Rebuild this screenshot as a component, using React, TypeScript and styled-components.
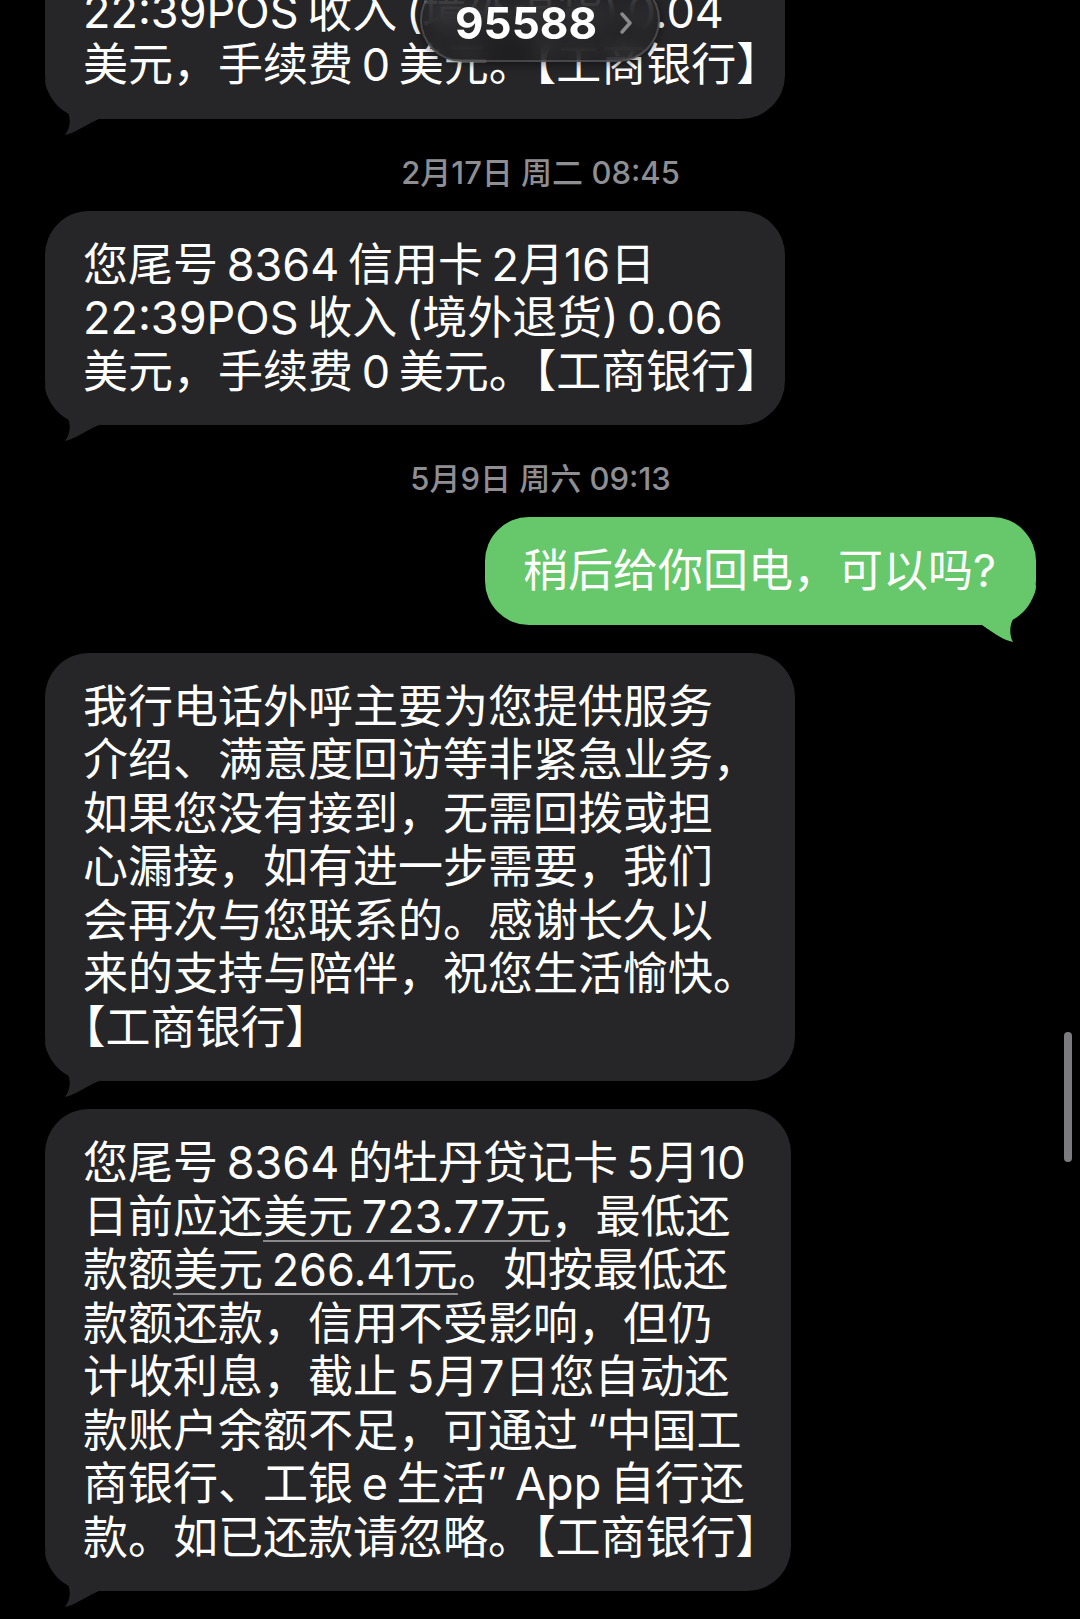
import React from "react";
import styled, { createGlobalStyle } from "styled-components";

const GlobalStyle = createGlobalStyle`
  html, body {
    margin: 0;
    padding: 0;
    background: #000;
    overflow: hidden;
  }
  body {
    font-family: Inter, "Noto Sans CJK SC", sans-serif;
  }
`;

type Line = React.ReactNode;

type Message =
  | { kind: "time"; text: string }
  | { kind: "in" | "out"; width: number; lines: Line[] };

const Money = styled.span`
  text-decoration: underline;
  text-decoration-color: #8a8a8c;
  text-decoration-thickness: 2px;
  text-underline-offset: 7px;
`;

const messages: Message[] = [
  {
    kind: "in",
    width: 740,
    lines: [
      "您尾号 8364 信用卡 2月16日",
      "22:39POS 收入 (境外退货) 0.04",
      "美元，手续费 0 美元。【工商银行】",
    ],
  },
  { kind: "time", text: "2月17日 周二 08:45" },
  {
    kind: "in",
    width: 740,
    lines: [
      "您尾号 8364 信用卡 2月16日",
      "22:39POS 收入 (境外退货) 0.06",
      "美元，手续费 0 美元。【工商银行】",
    ],
  },
  { kind: "time", text: "5月9日 周六 09:13" },
  { kind: "out", width: 551, lines: ["稍后给你回电，可以吗?"] },
  {
    kind: "in",
    width: 750,
    lines: [
      "我行电话外呼主要为您提供服务",
      "介绍、满意度回访等非紧急业务，",
      "如果您没有接到，无需回拨或担",
      "心漏接，如有进一步需要，我们",
      "会再次与您联系的。感谢长久以",
      "来的支持与陪伴，祝您生活愉快。",
      "【工商银行】",
    ],
  },
  {
    kind: "in",
    width: 746,
    lines: [
      "您尾号 8364 的牡丹贷记卡 5月10",
      <>
        日前应还<Money>美元 723.77元</Money>，最低还
      </>,
      <>
        款额<Money>美元 266.41元</Money>。如按最低还
      </>,
      "款额还款，信用不受影响，但仍",
      "计收利息，截止 5月7日您自动还",
      "款账户余额不足，可通过 “中国工",
      "商银行、工银 e 生活” App 自行还",
      "款。如已还款请忽略。【工商银行】",
    ],
  },
];

const InTail = () => (
  <TailSvg $side="left" width="80" height="60" viewBox="0 0 80 60">
    <path
      d="M0 0 C0 14 10 22 18 27 C25 32 28 46 20 56 C30 54 40 46 54 40 L80 40 L80 0 Z"
      fill="#262628"
    />
  </TailSvg>
);

const OutTail = () => (
  <TailSvg $side="right" width="80" height="60" viewBox="0 0 80 60">
    <path
      d="M80 0 C80 14 70 20 62 27 C54 35 52 48 57 57 C48 55 40 50 26 40 L0 40 L0 0 Z"
      fill="#66c86a"
    />
  </TailSvg>
);

const App = () => {
  return (
    <Screen>
      <GlobalStyle />
      <Thread>
        {messages.map((m, i) =>
          m.kind === "time" ? (
            <Stamp key={i}>{m.text}</Stamp>
          ) : (
            <Bubble key={i} $width={m.width} $sent={m.kind === "out"}>
              {m.kind === "out" ? <OutTail /> : <InTail />}
              <Text>
                {m.lines.map((l, j) => (
                  <TextLine key={j}>{l}</TextLine>
                ))}
              </Text>
            </Bubble>
          ),
        )}
      </Thread>

      <SenderPill>
        <SenderNumber>95588</SenderNumber>
        <svg width="14" height="24" viewBox="0 0 14 24">
          <path
            d="M3 3 L11 12 L3 21"
            fill="none"
            stroke="#8a8a8c"
            strokeWidth="3.5"
            strokeLinecap="round"
            strokeLinejoin="round"
          />
        </svg>
      </SenderPill>

      <ScrollThumb />
    </Screen>
  );
};

export default App;

const Screen = styled.div`
  position: relative;
  width: 1080px;
  height: 1619px;
  overflow: hidden;
  background: #000;
`;

/* the thread is scrolled: the first bubble starts above the top edge */
const Thread = styled.div`
  display: flex;
  flex-direction: column;
  margin-top: -96px;
  padding: 0 44px 0 45px;
`;

const Stamp = styled.div`
  padding: 34px 0 18px;
  text-align: center;
  font-size: 31px;
  line-height: 40px;
  font-weight: 500;
  color: #8e8e93;
`;

const Bubble = styled.div<{ $width: number; $sent?: boolean }>`
  position: relative;
  box-sizing: border-box;
  width: ${(p) => p.$width}px;
  padding: 27px 34px 27px 38px;
  border-radius: 44px;
  align-self: ${(p) => (p.$sent ? "flex-end" : "flex-start")};
  background: ${(p) => (p.$sent ? "#66c86a" : "#262628")};
  color: #fff;

  & + & {
    margin-top: 28px;
  }
`;

const TailSvg = styled.svg<{ $side: "left" | "right" }>`
  position: absolute;
  bottom: -20px;
  ${(p) => p.$side}: 0;
`;

const Text = styled.div`
  position: relative;
  font-size: 45px;
  line-height: 53.5px;
  word-spacing: -4px;
  text-spacing-trim: trim-start;
`;

const TextLine = styled.div`
  white-space: nowrap;
`;

const SenderPill = styled.div`
  position: absolute;
  left: 420px;
  top: -22px;
  width: 240px;
  height: 84px;
  box-sizing: border-box;
  display: flex;
  align-items: center;
  justify-content: center;
  gap: 22px;
  padding: 6px 0 0 8px;
  border-radius: 42px;
  border: 2px solid rgba(140, 140, 145, 0.35);
  background: rgba(30, 30, 32, 0.8);
  backdrop-filter: blur(10px);
  box-shadow: 0 2px 10px rgba(0, 0, 0, 0.5);
`;

const SenderNumber = styled.span`
  font-family: Inter, "Liberation Sans", sans-serif;
  font-size: 44px;
  font-weight: 700;
  line-height: 1;
  color: #fff;
`;

const ScrollThumb = styled.div`
  position: absolute;
  right: 8px;
  top: 1032px;
  width: 8px;
  height: 130px;
  border-radius: 4px;
  background: #7b7b7d;
`;
